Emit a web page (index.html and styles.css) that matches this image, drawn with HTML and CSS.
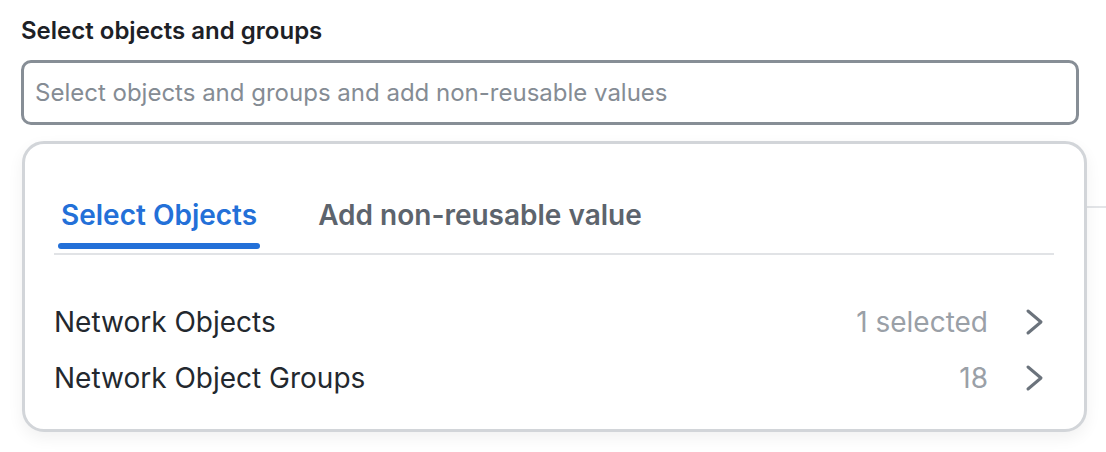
FILE: index.html
```html
<!DOCTYPE html>
<html>
<head>
<meta charset="utf-8">
<link rel="stylesheet" href="styles.css">
</head>
<body>
<div class="page">
  <div class="field-label">Select objects and groups</div>
  <div class="input">Select objects and groups and add non-reusable values</div>
  <div class="backdrop-line"></div>
  <div class="dropdown">
    <div class="tabs">
      <div class="tab active">Select Objects</div>
      <div class="tab">Add non-reusable value</div>
    </div>
    <div class="rows">
      <div class="row">
        <span class="row-name">Network Objects</span>
        <span class="row-meta">1 selected</span>
        <svg class="chev" width="20" height="28" viewBox="0 0 20 28"><path d="M3 3 L16 14 L3 25" fill="none" stroke="#6b737c" stroke-width="3" stroke-linecap="round" stroke-linejoin="round"/></svg>
      </div>
      <div class="row">
        <span class="row-name">Network Object Groups</span>
        <span class="row-meta">18</span>
        <svg class="chev" width="20" height="28" viewBox="0 0 20 28"><path d="M3 3 L16 14 L3 25" fill="none" stroke="#6b737c" stroke-width="3" stroke-linecap="round" stroke-linejoin="round"/></svg>
      </div>
    </div>
  </div>
</div>
</body>
</html>
```
FILE: styles.css
```css
html, body {
  margin: 0;
  background: #ffffff;
  font-family: Inter, "Noto Sans", sans-serif;
}
.page {
  position: relative;
  width: 1106px;
  height: 452px;
  padding: 17px 0 0 21px;
  box-sizing: border-box;
}
.field-label {
  font-size: 24px;
  font-weight: 600;
  color: #1d2126;
  line-height: 28px;
}
.input {
  margin-top: 15px;
  width: 1058px;
  height: 65px;
  box-sizing: border-box;
  border: 3px solid #878e96;
  border-radius: 10px;
  padding: 0 0 0 11px;
  display: flex;
  align-items: center;
  font-size: 24px;
  color: #858c94;
}
.backdrop-line {
  position: absolute;
  left: 1000px;
  right: 0;
  top: 206px;
  height: 2px;
  background: #e3e5e8;
}
.dropdown {
  position: absolute;
  left: 22px;
  top: 141px;
  width: 1065px;
  height: 291px;
  box-sizing: border-box;
  border: 3px solid #d2d5d9;
  border-radius: 22px;
  background: #ffffff;
  box-shadow: 0 6px 16px rgba(0, 0, 0, 0.06);
  padding: 0 30px 0 29px;
}
.tabs {
  display: flex;
  gap: 55px;
  margin-top: 52px;
  padding-left: 4px;
  border-bottom: 2px solid #e1e3e6;
}
.tab {
  font-size: 28px;
  font-weight: 600;
  color: #5d646d;
  line-height: 34px;
  padding: 2px 3px 0;
  height: 57px;
  box-sizing: border-box;
  position: relative;
}
.tab.active {
  color: #2370d8;
}
.tab.active::after {
  content: "";
  position: absolute;
  left: 0;
  right: 0;
  bottom: 4px;
  height: 6px;
  border-radius: 3px;
  background: #2370d8;
}
.rows {
  margin-top: 49px;
  display: flex;
  flex-direction: column;
  gap: 20px;
}
.row {
  display: flex;
  align-items: center;
  height: 36px;
  line-height: 36px;
  font-size: 28px;
}
.row-name {
  color: #23282e;
  flex: 1;
}
.row-meta {
  color: #9aa0a7;
  margin-right: 37px;
}
.chev {
  margin-right: 9px;
}
```
